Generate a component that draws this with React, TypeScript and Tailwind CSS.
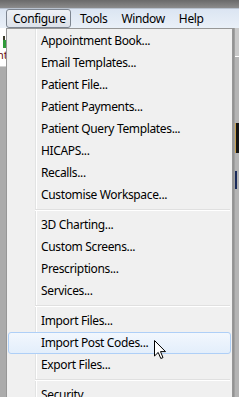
import React from 'react';

const groups: string[][] = [
  [
    'Appointment Book...',
    'Email Templates...',
    'Patient File...',
    'Patient Payments...',
    'Patient Query Templates...',
    'HICAPS...',
    'Recalls...',
    'Customise Workspace...',
  ],
  ['3D Charting...', 'Custom Screens...', 'Prescriptions...', 'Services...'],
  ['Import Files...', 'Import Post Codes...', 'Export Files...'],
  ['Security...'],
];

const HOVERED = 'Import Post Codes...';

function Separator() {
  return (
    <div className="h-[8px] flex flex-col justify-center pl-[28px] pr-[2px]">
      <div className="h-px bg-[#e0e0e0]" />
      <div className="h-px bg-white" />
    </div>
  );
}

function MenuItem({ label }: { label: string }) {
  const active = label === HOVERED;
  return (
    <div
      className={
        active
          ? 'h-[22px] mx-[1px] flex items-center rounded-[3px] border border-[#aecff7] bg-gradient-to-b from-[#f2f7fd] to-[#e3eefb] pl-[32px]'
          : 'h-[22px] mx-[1px] flex items-center border border-transparent pl-[32px]'
      }
    >
      <span className="text-[12px] tracking-[-0.35px] text-black leading-none">{label}</span>
    </div>
  );
}

function Cursor() {
  return (
    <svg
      className="absolute left-[154px] top-[340px]"
      width="13"
      height="20"
      viewBox="0 0 13 20"
    >
      <path
        d="M0.5 0.5 L0.5 16 L4.2 12.4 L6.8 18.5 L9 17.6 L6.5 11.6 L11.5 11.6 Z"
        fill="white"
        stroke="black"
        strokeWidth="1"
        strokeLinejoin="miter"
      />
    </svg>
  );
}

export default function App() {
  return (
    <div
      className="relative w-[239px] h-[397px] overflow-hidden bg-[#ababab]"
      style={{ fontFamily: '"Noto Sans", "Open Sans", sans-serif' }}
    >
      {/* window top */}
      <div className="h-[9px] bg-gradient-to-b from-[#6a6a6a] to-[#8c8c8c] border-b border-[#b8c2cf]" />

      {/* menu bar */}
      <div className="h-[19px] flex items-center bg-gradient-to-b from-[#dbe5f2] to-[#eaf0f8] text-[12px] tracking-[-0.35px] text-black">
        <div className="ml-[6px] h-[19px] w-[65px] flex items-center pl-[6px] rounded-[3px] border border-[#7d8590] bg-gradient-to-b from-[#eef1f5] to-[#dde2ea]">
          Configure
        </div>
        <span className="ml-[9px]">Tools</span>
        <span className="ml-[14px]">Window</span>
        <span className="ml-[14px]">Help</span>
      </div>

      <div className="flex">
        {/* left edge of main window */}
        <div className="w-[6px] flex flex-col">
          <div className="h-[8px] bg-white" />
          <div className="h-[4px] bg-white flex">
            <div className="w-[2px] h-full bg-[#3b3b2b] ml-[3px]" />
          </div>
          <div className="h-[8px] bg-white flex">
            <div className="w-[3px] h-full bg-[#2f9a3a] ml-[3px]" />
          </div>
          <div className="h-[14px] bg-white flex items-center overflow-hidden">
            <span className="text-[11px] -ml-[3px] text-[#6a1010]">nt</span>
          </div>
          <div className="h-[5px] bg-white border-b border-[#d0d0d0]" />
        </div>

        {/* dropdown */}
        <div className="relative w-[227px] h-[369px] bg-[#f0f0f0] border-t border-l border-r border-[#979797] pt-[1px]">
          <div className="absolute left-[28px] top-0 bottom-0 w-px bg-[#e2e3e3]" />
          <div className="absolute left-[29px] top-0 bottom-0 w-px bg-white" />
          <div className="relative flex flex-col">
            {groups.map((items, gi) => (
              <React.Fragment key={gi}>
                {gi > 0 && <Separator />}
                {items.map((label) => (
                  <MenuItem key={label} label={label} />
                ))}
              </React.Fragment>
            ))}
          </div>
        </div>

        {/* right edge shadow + background */}
        <div className="w-[6px] flex">
          <div className="w-[2px] bg-gradient-to-r from-[#8c8c8c] to-[#a8a8a8]" />
          <div className="flex-1 flex flex-col bg-[#b4b4b4]">
            <div className="h-[28px] bg-[#c9c9c9]" />
            <div className="h-px bg-white" />
            <div className="h-[66px]" />
            <div className="h-[30px] bg-[#141414] border-l border-[#c8a050]" />
            <div className="h-[18px]" />
            <div className="h-[18px] w-[2px] bg-[#1a2a5a]" />
          </div>
        </div>
      </div>

      <Cursor />
    </div>
  );
}
